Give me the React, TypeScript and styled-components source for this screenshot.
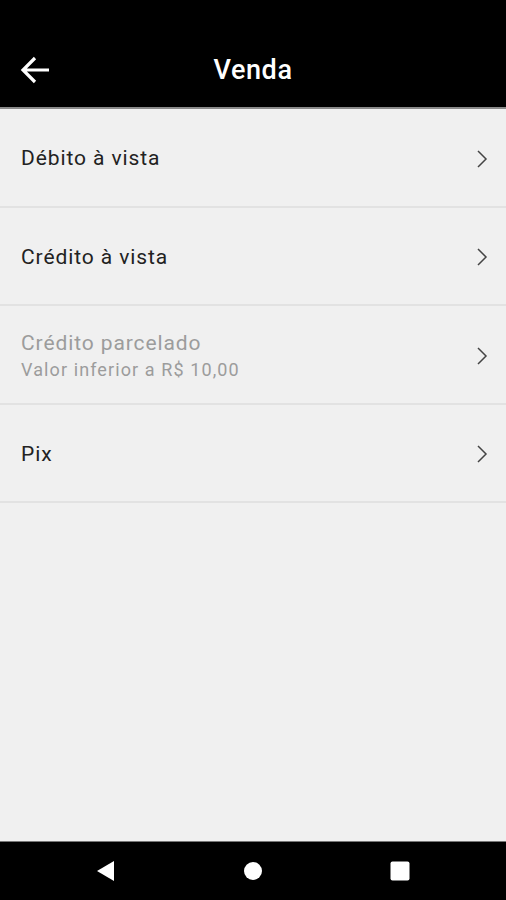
import React from "react";
import styled, { createGlobalStyle } from "styled-components";

const Global = createGlobalStyle`
  html, body { margin: 0; padding: 0; }
  body { background: #f0f0f0; font-family: Roboto, "Noto Sans", Arial, sans-serif; }
  * { box-sizing: border-box; }
`;

const Screen = styled.div`
  width: 506px;
  height: 900px;
  display: flex;
  flex-direction: column;
  background: #f0f0f0;
  overflow: hidden;
`;

const AppBar = styled.header`
  height: 109px;
  flex: none;
  background: #000;
  border-bottom: 2px solid #8a8a8a;
  display: grid;
  grid-template-columns: 70px 1fr 70px;
  align-items: end;
  padding-bottom: 20px;
`;

const BackButton = styled.button`
  background: none;
  border: none;
  padding: 0 0 0 19px;
  height: 34px;
  display: flex;
  align-items: center;
  cursor: pointer;
`;

const Title = styled.h1`
  margin: 0;
  text-align: center;
  color: #fff;
  font-family: Roboto, sans-serif;
  font-weight: 500;
  font-size: 27px;
  line-height: 34px;
  letter-spacing: 0.6px;
`;

const List = styled.ul`
  list-style: none;
  margin: 0;
  padding: 0;
  flex: 1;
`;

const Row = styled.li`
  height: 98.5px;
  display: flex;
  align-items: center;
  justify-content: space-between;
  padding: 3px 18px 0 21px;
  border-bottom: 2px solid #e2e2e2;
`;

const Texts = styled.div`
  display: flex;
  flex-direction: column;
`;

const Label = styled.span<{ $disabled?: boolean }>`
  font-size: 21px;
  line-height: 27px;
  letter-spacing: 0.9px;
  color: ${(p) => (p.$disabled ? "#9c9c9c" : "#222")};
`;

const Sub = styled.span`
  font-size: 18px;
  line-height: 25px;
  letter-spacing: 1.1px;
  color: #9c9c9c;
`;

const NavBar = styled.nav`
  height: 59px;
  flex: none;
  background: #000;
  border-top: 1px solid #777;
  display: flex;
  align-items: center;
  justify-content: center;
  gap: 127px;
`;

const Chevron = () => (
  <svg width="12" height="20" viewBox="0 0 12 20">
    <path d="M2 2 L10 10 L2 18" fill="none" stroke="#444" strokeWidth="1.5" />
  </svg>
);

const items = [
  { label: "Débito à vista" },
  { label: "Crédito à vista" },
  { label: "Crédito parcelado", sub: "Valor inferior a R$ 10,00", disabled: true },
  { label: "Pix" },
];

export default function App() {
  return (
    <>
      <Global />
      <Screen>
        <AppBar>
          <BackButton aria-label="Voltar">
            <svg width="32" height="30" viewBox="0 0 32 30">
              <path d="M30 15 H4 M16 3 L4 15 L16 27" fill="none" stroke="#fff" strokeWidth="3.2" />
            </svg>
          </BackButton>
          <Title>Venda</Title>
          <div />
        </AppBar>
        <List>
          {items.map((it) => (
            <Row key={it.label}>
              <Texts>
                <Label $disabled={it.disabled}>{it.label}</Label>
                {it.sub && <Sub>{it.sub}</Sub>}
              </Texts>
              <Chevron />
            </Row>
          ))}
        </List>
        <NavBar>
          <svg width="20" height="22" viewBox="0 0 20 22">
            <path d="M18 1 V21 L1 11 Z" fill="#fff" />
          </svg>
          <svg width="20" height="20" viewBox="0 0 20 20">
            <circle cx="10" cy="10" r="9" fill="#fff" />
          </svg>
          <svg width="20" height="20" viewBox="0 0 20 20">
            <rect x="0.5" y="0.5" width="19" height="19" rx="2" fill="#fff" />
          </svg>
        </NavBar>
      </Screen>
    </>
  );
}
